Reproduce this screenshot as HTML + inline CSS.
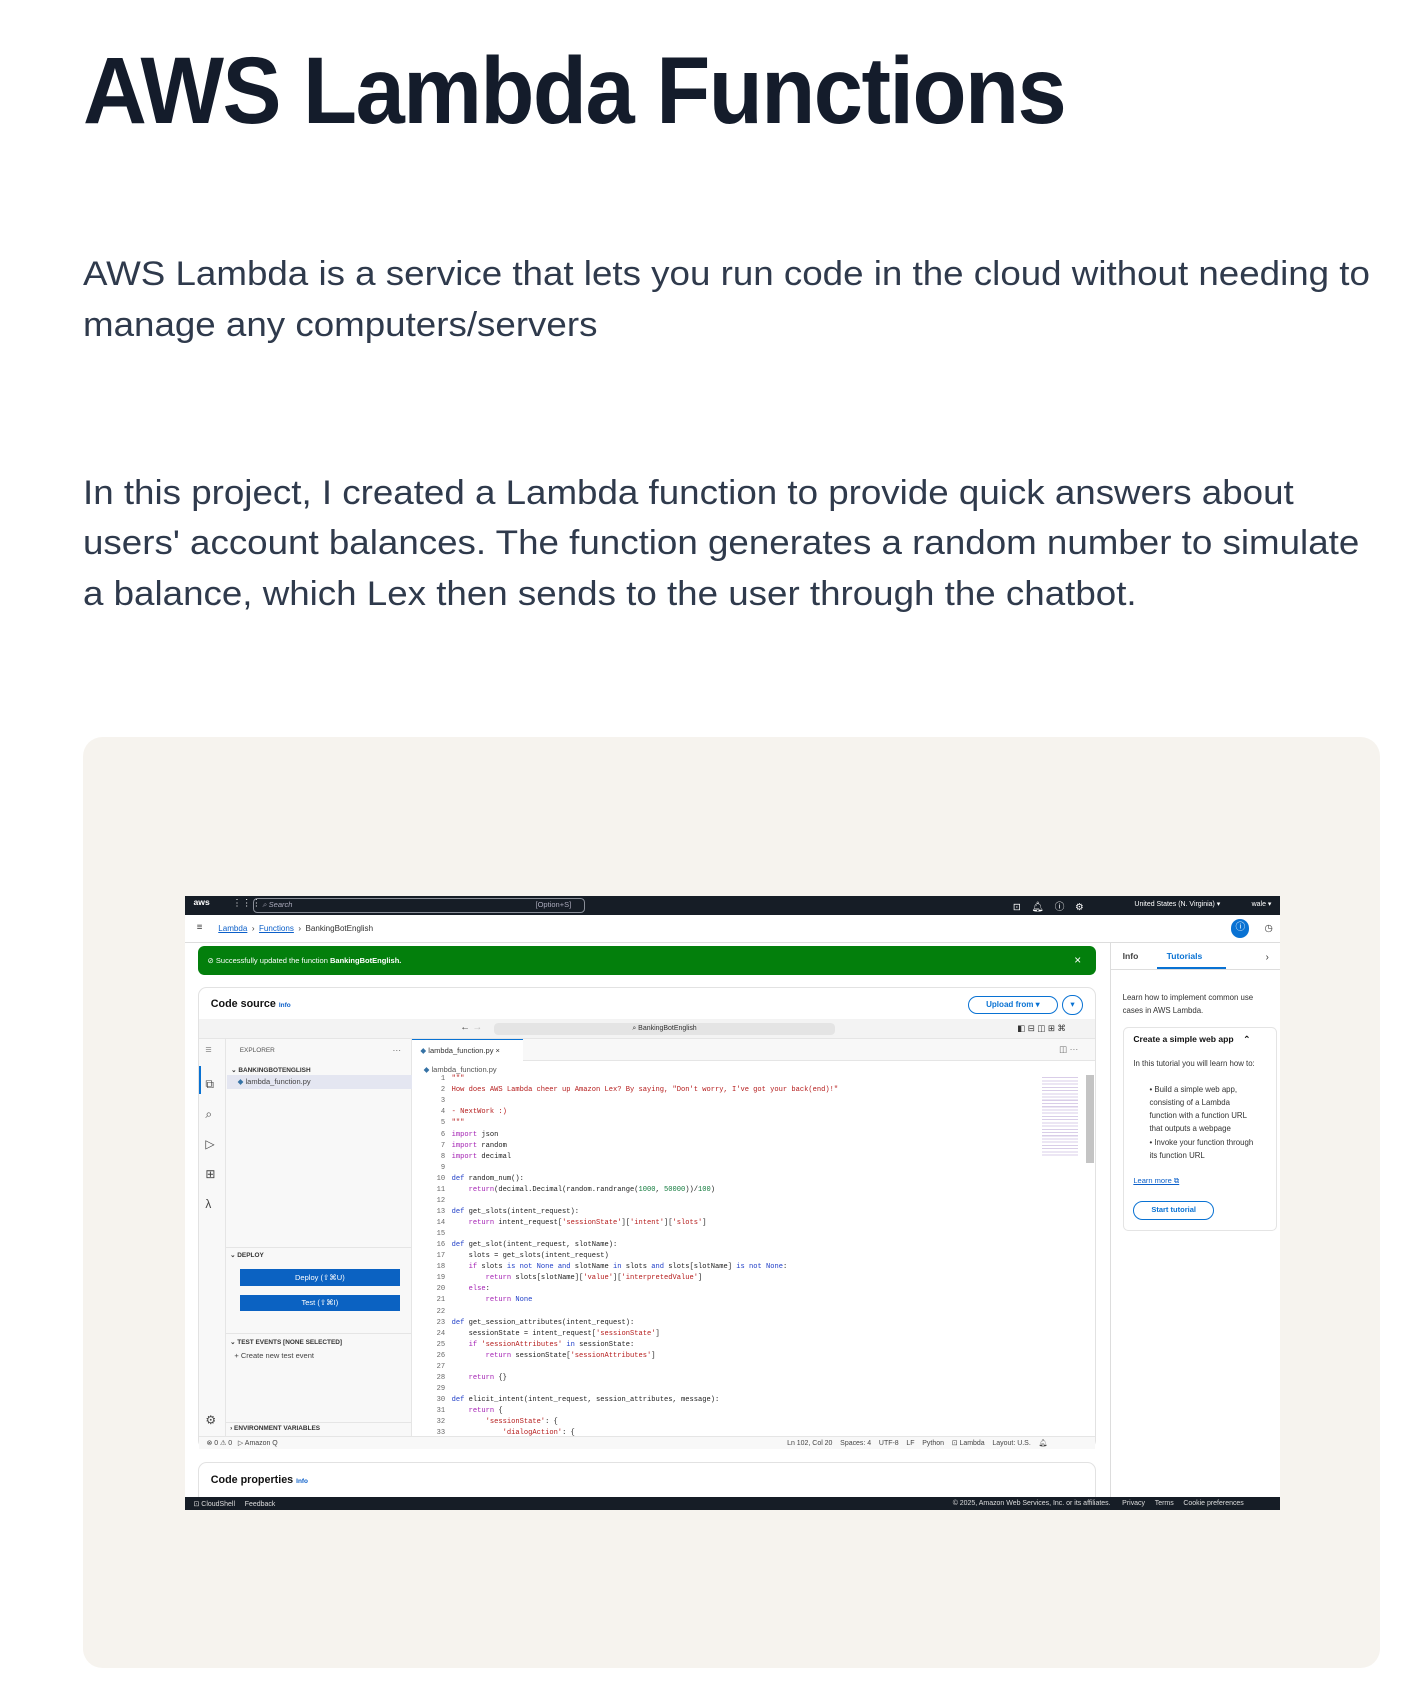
<!DOCTYPE html>
<html><head><meta charset="utf-8"><style>
*{margin:0;padding:0;box-sizing:border-box}
html,body{width:1413px;height:1684px;background:#fff;overflow:hidden}
#w{position:absolute;left:0;top:0;width:1314px;height:1566px;zoom:1.0753;font-family:"Liberation Sans",sans-serif}
h1{position:absolute;left:77px;top:30px;font-size:88px;font-weight:700;color:#141c2b;letter-spacing:-1.5px;white-space:nowrap;line-height:110px;transform:scaleX(0.935);transform-origin:0 0}
.p{position:absolute;left:77px;font-size:32px;line-height:47px;color:#2f3a4c;letter-spacing:0;white-space:nowrap;transform:scaleX(1.068);transform-origin:0 0}
#card{position:absolute;left:77px;top:685px;width:1206px;height:866px;background:#f6f3ee;border-radius:18px}
#ss{position:absolute;left:172px;top:833px;width:1018px;height:571px;background:#fff;overflow:hidden;font-size:7px;color:#333}
.a{position:absolute;white-space:nowrap}
.dk{background:#161d26}
.mono{font-family:"Liberation Mono",monospace;font-size:6.6px}
.bl{color:#0b5fc9}
.code div{height:10.3px;line-height:10.3px}
.k{color:#a31fb3}.s{color:#b51c1c}.d{color:#1f3ec7}.n{color:#117a3c}
</style></head><body><div id="w">
<h1>AWS Lambda Functions</h1>
<div class="p" style="top:232px">AWS Lambda is a service that lets you run code in the cloud without needing to<br>manage any computers/servers</div>
<div class="p" style="top:435px">In this project, I created a Lambda function to provide quick answers about<br>users' account balances. The function generates a random number to simulate<br>a balance, which Lex then sends to the user through the chatbot.</div>
<div id="card"></div>
<div id="ss">
 <div class="a dk" style="left:0;top:0;width:1018px;height:18px"></div>
 <div class="a" style="left:8px;top:1px;color:#fff;font-size:8px;font-weight:700">aws</div>
 <div class="a" style="left:44px;top:2px;color:#fff;font-size:9px">⋮⋮⋮</div>
 <div class="a" style="left:63px;top:2px;width:309px;height:14px;border:1px solid #8a8f99;border-radius:4px"></div>
 <div class="a" style="left:72px;top:4px;color:#aab;font-style:italic">⌕ Search</div>
 <div class="a" style="left:326px;top:4px;color:#aab">[Option+S]</div>
 <div class="a" style="left:770px;top:3px;color:#fff;font-size:9px">⊡&nbsp;&nbsp;&nbsp;&nbsp;🔔︎&nbsp;&nbsp;&nbsp;&nbsp;ⓘ&nbsp;&nbsp;&nbsp;&nbsp;⚙</div>
 <div class="a" style="left:883px;top:4px;color:#fff;font-size:6.5px">United States (N. Virginia) ▾</div>
 <div class="a" style="left:992px;top:4px;color:#fff;font-size:6.5px">wale ▾</div>
 <div class="a" style="left:0;top:18px;width:1018px;height:26px;border-bottom:1px solid #ddd"></div>
 <div class="a" style="left:11px;top:24px;font-size:9px">≡</div>
 <div class="a" style="left:31px;top:26px;font-size:7.5px"><span class="bl" style="text-decoration:underline">Lambda</span>&nbsp;&nbsp;›&nbsp;&nbsp;<span class="bl" style="text-decoration:underline">Functions</span>&nbsp;&nbsp;›&nbsp;&nbsp;BankingBotEnglish</div>
 <div class="a" style="left:973px;top:22px;width:17px;height:17px;border-radius:50%;background:#0972d3;color:#fff;text-align:center;line-height:17px;font-size:9px">ⓘ</div>
 <div class="a" style="left:1004px;top:25px;font-size:9px">◷</div>
 <div class="a" style="left:860px;top:44px;width:1px;height:515px;background:#ddd"></div>
 <div class="a" style="left:861px;top:44px;width:157px;height:25px;border-bottom:1px solid #ddd"></div>
 <div class="a" style="left:872px;top:51px;font-size:8px;font-weight:700;color:#444">Info</div>
 <div class="a" style="left:913px;top:51px;font-size:8px;font-weight:700;color:#0972d3">Tutorials</div>
 <div class="a" style="left:904px;top:66px;width:64px;height:2px;background:#0972d3"></div>
 <div class="a" style="left:1005px;top:52px;font-size:9px">›</div>
 <div class="a" style="left:872px;top:90px;font-size:7.3px;line-height:12px;color:#333;width:140px;white-space:normal">Learn how to implement common use cases in AWS Lambda.</div>
 <div class="a" style="left:872px;top:122px;width:144px;height:190px;border:1px solid #e4e4e4;border-radius:5px"></div>
 <div class="a" style="left:882px;top:129px;font-size:8px;font-weight:700;color:#111">Create a simple web app&nbsp;&nbsp;&nbsp;&nbsp;⌃</div>
 <div class="a" style="left:882px;top:150px;width:125px;white-space:normal;line-height:12.3px;font-size:7.3px">In this tutorial you will learn how to:</div>
 <div class="a" style="left:897px;top:174px;width:100px;white-space:normal;line-height:12.3px;font-size:7.3px">• Build a simple web app, consisting of a Lambda function with a function URL that outputs a webpage<br>• Invoke your function through its function URL</div>
 <div class="a bl" style="left:882px;top:261px;font-size:7px;text-decoration:underline">Learn more ⧉</div>
 <div class="a" style="left:882px;top:284px;width:75px;height:18px;border:1.5px solid #0972d3;border-radius:9px;color:#0972d3;font-weight:700;font-size:7px;text-align:center;line-height:15px">Start tutorial</div>
 <div class="a" style="left:12px;top:47px;width:835px;height:27px;background:#037f0c;border-radius:6px"></div>
 <div class="a" style="left:21px;top:56px;color:#fff;font-size:7px">⊘ Successfully updated the function <b>BankingBotEnglish.</b></div>
 <div class="a" style="left:827px;top:53px;color:#fff;font-size:11px">×</div>
 <div class="a" style="left:12px;top:85px;width:835px;height:430px;border:1px solid #e2e2e2;border-radius:8px;background:#fff"></div>
 <div class="a" style="left:24px;top:95px;font-size:10px;font-weight:700;color:#111">Code source <span class="bl" style="font-size:6px">Info</span></div>
 <div class="a" style="left:728px;top:93px;width:84px;height:17px;border:1.5px solid #0972d3;border-radius:9px;color:#0972d3;font-weight:700;font-size:7.5px;text-align:center;line-height:14px">Upload from ▾</div>
 <div class="a" style="left:816px;top:92px;width:19px;height:19px;border:1.5px solid #0972d3;border-radius:50%;color:#0972d3;font-size:8px;text-align:center;line-height:16px">▾</div>
 <div class="a" style="left:13px;top:115px;width:833px;height:18px;background:#f3f3f3;border-bottom:1px solid #e5e5e5"></div>
 <div class="a" style="left:256px;top:117px;font-size:9px">←&nbsp;<span style="color:#bbb">→</span></div>
 <div class="a" style="left:287px;top:118px;width:318px;height:12px;background:#e4e4e4;border-radius:4px;text-align:center;font-size:6.5px;line-height:12px">⌕ BankingBotEnglish</div>
 <div class="a" style="left:774px;top:118px;font-size:8px">◧ ⊟ ◫ ⊞ ⌘</div>
 <div class="a" style="left:13px;top:133px;width:25px;height:369px;background:#f8f8f8;border-right:1px solid #e5e5e5"></div>
 <div class="a" style="left:19px;top:138px;font-size:10px;color:#888">≡</div>
 <div class="a" style="left:13px;top:158px;width:2px;height:26px;background:#0972d3"></div>
 <div class="a" style="left:19px;top:161px;font-size:11px;color:#444;line-height:28px">⧉<br>⌕<br>▷<br>⊞<br>λ</div>
 <div class="a" style="left:19px;top:481px;font-size:11px;color:#444">⚙</div>
 <div class="a" style="left:38px;top:133px;width:173px;height:369px;background:#f8f8f8;border-right:1px solid #e5e5e5"></div>
 <div class="a" style="left:51px;top:141px;font-size:6px;color:#555">EXPLORER</div>
 <div class="a" style="left:193px;top:139px;font-size:8px;color:#555">···</div>
 <div class="a" style="left:43px;top:158px;font-size:6px;font-weight:700;color:#333">⌄ BANKINGBOTENGLISH</div>
 <div class="a" style="left:39px;top:167px;width:172px;height:13px;background:#e4e6f1"></div>
 <div class="a" style="left:49px;top:169px;font-size:7px;color:#444"><span style="color:#3572a5">◆</span> lambda_function.py</div>
 <div class="a" style="left:38px;top:327px;width:172px;height:1px;background:#e5e5e5"></div>
 <div class="a" style="left:42px;top:330px;font-size:6px;font-weight:700;color:#333">⌄ DEPLOY</div>
 <div class="a" style="left:51px;top:347px;width:149px;height:16px;background:#0b62c2;color:#fff;font-size:7px;text-align:center;line-height:16px">Deploy (⇧⌘U)</div>
 <div class="a" style="left:51px;top:371px;width:149px;height:15px;background:#0b62c2;color:#fff;font-size:7px;text-align:center;line-height:15px">Test (⇧⌘I)</div>
 <div class="a" style="left:38px;top:407px;width:172px;height:1px;background:#e5e5e5"></div>
 <div class="a" style="left:42px;top:411px;font-size:6px;font-weight:700;color:#333">⌄ TEST EVENTS [NONE SELECTED]</div>
 <div class="a" style="left:46px;top:423px;font-size:7px;color:#444">+ Create new test event</div>
 <div class="a" style="left:38px;top:489px;width:172px;height:1px;background:#e5e5e5"></div>
 <div class="a" style="left:42px;top:492px;font-size:6px;font-weight:700;color:#333">› ENVIRONMENT VARIABLES</div>
 <div class="a" style="left:211px;top:133px;width:635px;height:21px;background:#f8f8f8;border-bottom:1px solid #e5e5e5"></div>
 <div class="a" style="left:211px;top:133px;width:103px;height:21px;background:#fff;border-top:1.5px solid #0972d3"></div>
 <div class="a" style="left:219px;top:140px;font-size:7px;color:#333"><span style="color:#3572a5">◆</span> lambda_function.py ×</div>
 <div class="a" style="left:813px;top:138px;font-size:8px;color:#666">◫ ···</div>
 <div class="a" style="left:222px;top:157px;font-size:7px;color:#555"><span style="color:#3572a5">◆</span> lambda_function.py</div>
 <div class="a mono code" style="left:222px;top:166px;width:20px;text-align:right;color:#666">
 <div>1</div><div>2</div><div>3</div><div>4</div><div>5</div><div>6</div><div>7</div><div>8</div><div>9</div><div>10</div><div>11</div><div>12</div><div>13</div><div>14</div><div>15</div><div>16</div><div>17</div><div>18</div><div>19</div><div>20</div><div>21</div><div>22</div><div>23</div><div>24</div><div>25</div><div>26</div><div>27</div><div>28</div><div>29</div><div>30</div><div>31</div><div>32</div><div>33</div></div>
 <div class="a mono code" style="left:248px;top:166px;color:#222">
 <div class="s">"""</div>
 <div class="s">How does AWS Lambda cheer up Amazon Lex? By saying, "Don't worry, I've got your back(end)!"</div>
 <div></div>
 <div class="s">- NextWork :)</div>
 <div class="s">"""</div>
 <div><span class="k">import</span> json</div>
 <div><span class="k">import</span> random</div>
 <div><span class="k">import</span> decimal</div>
 <div></div>
 <div><span class="d">def</span> random_num():</div>
 <div>&nbsp;&nbsp;&nbsp;&nbsp;<span class="k">return</span>(decimal.Decimal(random.randrange(<span class="n">1000</span>, <span class="n">50000</span>))/<span class="n">100</span>)</div>
 <div></div>
 <div><span class="d">def</span> get_slots(intent_request):</div>
 <div>&nbsp;&nbsp;&nbsp;&nbsp;<span class="k">return</span> intent_request[<span class="s">'sessionState'</span>][<span class="s">'intent'</span>][<span class="s">'slots'</span>]</div>
 <div></div>
 <div><span class="d">def</span> get_slot(intent_request, slotName):</div>
 <div>&nbsp;&nbsp;&nbsp;&nbsp;slots = get_slots(intent_request)</div>
 <div>&nbsp;&nbsp;&nbsp;&nbsp;<span class="k">if</span> slots <span class="d">is not None and</span> slotName <span class="d">in</span> slots <span class="d">and</span> slots[slotName] <span class="d">is not None</span>:</div>
 <div>&nbsp;&nbsp;&nbsp;&nbsp;&nbsp;&nbsp;&nbsp;&nbsp;<span class="k">return</span> slots[slotName][<span class="s">'value'</span>][<span class="s">'interpretedValue'</span>]</div>
 <div>&nbsp;&nbsp;&nbsp;&nbsp;<span class="k">else</span>:</div>
 <div>&nbsp;&nbsp;&nbsp;&nbsp;&nbsp;&nbsp;&nbsp;&nbsp;<span class="k">return</span> <span class="d">None</span></div>
 <div></div>
 <div><span class="d">def</span> get_session_attributes(intent_request):</div>
 <div>&nbsp;&nbsp;&nbsp;&nbsp;sessionState = intent_request[<span class="s">'sessionState'</span>]</div>
 <div>&nbsp;&nbsp;&nbsp;&nbsp;<span class="k">if</span> <span class="s">'sessionAttributes'</span> <span class="d">in</span> sessionState:</div>
 <div>&nbsp;&nbsp;&nbsp;&nbsp;&nbsp;&nbsp;&nbsp;&nbsp;<span class="k">return</span> sessionState[<span class="s">'sessionAttributes'</span>]</div>
 <div></div>
 <div>&nbsp;&nbsp;&nbsp;&nbsp;<span class="k">return</span> {}</div>
 <div></div>
 <div><span class="d">def</span> elicit_intent(intent_request, session_attributes, message):</div>
 <div>&nbsp;&nbsp;&nbsp;&nbsp;<span class="k">return</span> {</div>
 <div>&nbsp;&nbsp;&nbsp;&nbsp;&nbsp;&nbsp;&nbsp;&nbsp;<span class="s">'sessionState'</span>: {</div>
 <div>&nbsp;&nbsp;&nbsp;&nbsp;&nbsp;&nbsp;&nbsp;&nbsp;&nbsp;&nbsp;&nbsp;&nbsp;<span class="s">'dialogAction'</span>: {</div>
 </div>
 <div class="a" style="left:797px;top:167px;width:34px;height:75px;background:repeating-linear-gradient(#fff 0 2px,#d9cde8 2px 3px)"></div>
 <div class="a" style="left:838px;top:167px;width:7px;height:82px;background:#c4c4c4"></div>
 <div class="a" style="left:13px;top:502px;width:833px;height:13px;background:#f8f8f8;border-top:1px solid #e5e5e5"></div>
 <div class="a" style="left:20px;top:505px;font-size:6.5px;color:#444">⊗ 0 ⚠ 0&nbsp;&nbsp;&nbsp;▷ Amazon Q</div>
 <div class="a" style="left:560px;top:505px;font-size:6.5px;color:#444">Ln 102, Col 20&nbsp;&nbsp;&nbsp;&nbsp;Spaces: 4&nbsp;&nbsp;&nbsp;&nbsp;UTF-8&nbsp;&nbsp;&nbsp;&nbsp;LF&nbsp;&nbsp;&nbsp;&nbsp;Python&nbsp;&nbsp;&nbsp;&nbsp;⊡ Lambda&nbsp;&nbsp;&nbsp;&nbsp;Layout: U.S.&nbsp;&nbsp;&nbsp;&nbsp;🔔︎</div>
 <div class="a" style="left:12px;top:527px;width:835px;height:40px;border:1px solid #e2e2e2;border-radius:8px;background:#fff"></div>
 <div class="a" style="left:24px;top:538px;font-size:10px;font-weight:700;color:#111">Code properties <span class="bl" style="font-size:6px">Info</span></div>
 <div class="a dk" style="left:0;top:559px;width:1018px;height:12px"></div>
 <div class="a" style="left:8px;top:562px;color:#ddd;font-size:6.5px">⊡ CloudShell&nbsp;&nbsp;&nbsp;&nbsp;&nbsp;Feedback</div>
 <div class="a" style="left:714px;top:562px;color:#ddd;font-size:6.5px">© 2025, Amazon Web Services, Inc. or its affiliates.&nbsp;&nbsp;&nbsp;&nbsp;&nbsp;&nbsp;Privacy&nbsp;&nbsp;&nbsp;&nbsp;&nbsp;Terms&nbsp;&nbsp;&nbsp;&nbsp;&nbsp;Cookie preferences</div>
</div>
</div></body></html>
